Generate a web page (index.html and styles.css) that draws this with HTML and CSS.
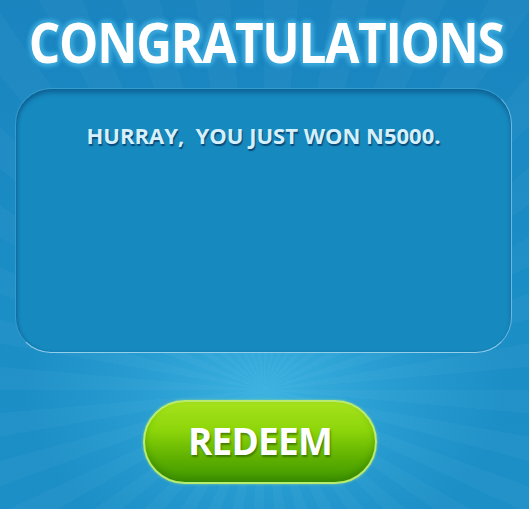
FILE: index.html
```html
<!DOCTYPE html>
<html>
<head>
<meta charset="utf-8">
<link rel="stylesheet" href="styles.css">
</head>
<body>
<div class="screen">
  <h1 class="title"><span class="title-text">CONGRATULATIONS</span></h1>
  <div class="panel">
    <p class="message">HURRAY,&nbsp; YOU JUST WON N5000.</p>
  </div>
  <div class="actions">
    <button class="redeem">REDEEM</button>
  </div>
</div>
</body>
</html>
```
FILE: styles.css
```css
html, body {
  margin: 0;
  padding: 0;
}
body {
  width: 529px;
  height: 509px;
  overflow: hidden;
  font-family: "Open Sans", "Lato", sans-serif;
}
.screen {
  width: 529px;
  height: 509px;
  box-sizing: border-box;
  padding: 10px 15px 0 15px;
  display: flex;
  flex-direction: column;
  background:
    repeating-conic-gradient(from 0deg at 264px 390px, rgba(255,255,255,0.028) 0deg 5deg, rgba(255,255,255,0) 5deg 10deg),
    radial-gradient(ellipse 240px 170px at 264px 390px, #3bb2e0 0%, #2a9fd3 45%, rgba(26,140,196,0) 100%),
    linear-gradient(#1a84bf, #1b8ec6 60%, #1c8fc6);
}
.title {
  margin: 0 0 0 3px;
  height: 68px;
  display: flex;
  justify-content: center;
  white-space: nowrap;
  font-weight: 700;
  font-size: 56px;
  line-height: 62px;
}
.title-text {
  display: block;
  flex: none;
  color: #fff;
  letter-spacing: -1.5px;
  transform: scaleX(0.885);
  text-shadow:
    0 0 2px #3ba6d9, 0 0 4px #3ba6d9, 0 0 6px #3ba6d9, 0 0 8px #3ba6d9,
    3px 0 5px #3ba6d9, -3px 0 5px #3ba6d9, 0 3px 5px #3ba6d9, 0 -3px 5px #3ba6d9;
}
.panel {
  margin-top: 10px;
  height: 265px;
  width: 497px;
  box-sizing: border-box;
  border-radius: 36px;
  background: #1689bf;
  border: 1px solid rgba(120,200,235,0.3);
  border-bottom-color: rgba(190,230,250,0.75);
  border-right-color: rgba(160,215,245,0.6);
  box-shadow: inset 0 4px 4px rgba(0,40,90,0.35), inset 2px 0 3px rgba(0,40,90,0.15);
  padding-top: 31px;
}
.message {
  margin: 0;
  text-align: center;
  color: #d6f0fb;
  font-weight: 700;
  font-size: 22px;
  letter-spacing: 0;
  line-height: 30px;
  text-shadow: 1px 2px 1px #0a4a78;
}
.actions {
  display: flex;
  justify-content: center;
  margin-top: 47px;
  padding-right: 9px;
}
.redeem {
  width: 234px;
  height: 84px;
  border-radius: 42px;
  border: 2px solid #b8ec70;
  background: linear-gradient(#a6e21c 0%, #8dd60a 35%, #5fb000 70%, #3f9800 100%);
  box-shadow: 0 0 3px rgba(180,240,120,0.6), inset 0 -4px 6px rgba(40,110,0,0.4);
  color: #fff;
  font-family: "Open Sans", "Lato", sans-serif;
  font-weight: 700;
  font-size: 37px;
  letter-spacing: -0.8px;
  text-shadow: 1px 2px 2px rgba(30,80,0,0.6);
  padding: 0 0 4px 0;
  cursor: pointer;
}
```
